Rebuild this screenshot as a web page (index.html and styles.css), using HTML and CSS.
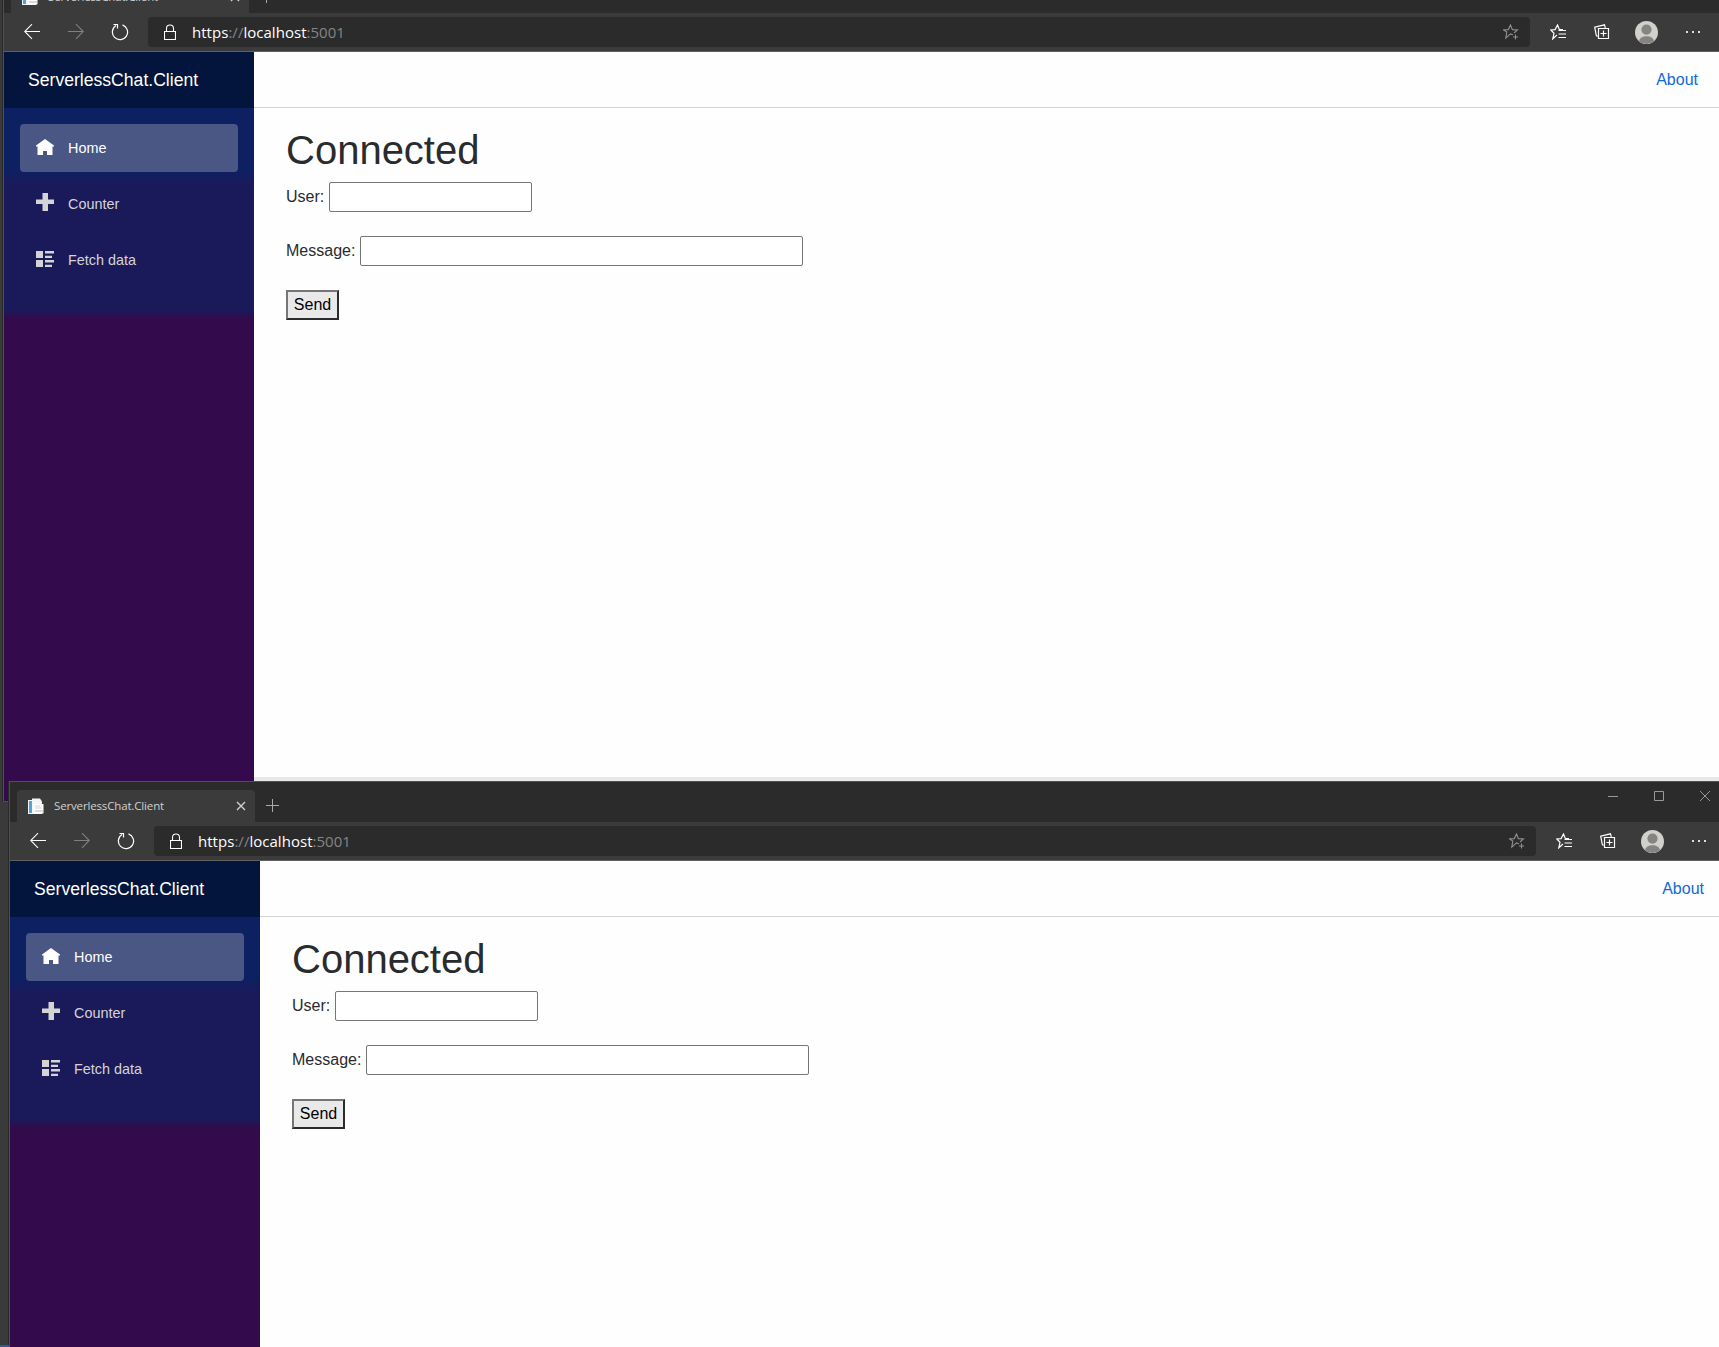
FILE: index.html
```html
<!DOCTYPE html>
<html lang="en">
<head>
<meta charset="utf-8">
<title>ServerlessChat.Client</title>
<link rel="stylesheet" href="styles.css">
</head>
<body>
<svg width="0" height="0" class="defs" aria-hidden="true">
  <symbol id="i-file" viewBox="0 0 16 16"><path d="M0 2h5v14H0z" fill="#eef4f8"/><path d="M1 3h3v12H1z" fill="#55a3d4"/><path d="M4 .5h8l2 3V16H4z" fill="#f5f5f5"/><path d="M6 6h9.500v9.500H6z" fill="#fff"/><path d="M7 8h5M7 10h7" stroke="#c9d5dc" fill="none"/><path d="M7 12h8v2H7z" fill="#dadada"/></symbol>
  <symbol id="i-x" viewBox="0 0 10 10"><path d="M1 1l8 8M9 1l-8 8" stroke="#d0d0d0" stroke-width="1.400"/></symbol>
  <symbol id="i-plus" viewBox="0 0 13 13"><path d="M6.500 0v13M0 6.500h13" stroke="#aaa"/></symbol>
  <symbol id="i-back" viewBox="0 0 16 16"><path d="M0.500 7.500H16M8 .200L.700 7.500 8 14.800" stroke="#fff" stroke-width="1.100" fill="none"/></symbol>
  <symbol id="i-fwd" viewBox="0 0 16 16"><path d="M0 7.500h15.500M8 .200l7.300 7.300L8 14.800" stroke="#808080" stroke-width="1.100" fill="none"/></symbol>
  <symbol id="i-reload" viewBox="0 0 18 18"><path d="M11.500 1.900A7.600 7.600 0 1 1 5 2.600M2.500 1.500h4v4" stroke="#fff" stroke-width="1.200" fill="none"/></symbol>
  <symbol id="i-lock" viewBox="0 0 12 17"><path d="M.500 7.500h11v8H.500zM2.500 7.500V4.500a3.500 3.500 0 0 1 7 0v3" stroke="#fff" stroke-width="1.100" fill="none"/></symbol>
  <symbol id="i-star" viewBox="0 0 16 16"><path d="M10.500 10.800L8 9.900l-4.700 4.200 1-6L.900 5.900l4.900-.300L8 1l1.900 4.600 5 .300L11.500 9M13 10.500v5M10.500 13h5" transform="translate(-.500 0)" stroke="#909090" stroke-width="1.100" fill="none"/></symbol>
  <symbol id="i-favs" viewBox="0 0 16 16"><path d="M7 11l-4.200 3.800L4 9.300.800 6l4.300-.400L7.500 1l1.800 4.500H13M8.500 6.500H16M8.500 10H16M8.500 13.500H16" stroke="#fff" stroke-width="1.200" fill="none"/></symbol>
  <symbol id="i-coll" viewBox="0 0 16 16"><path d="M4.500 4.500h10v10h-10zM9.500 6.500v6M6.500 9.500h6M3.500 12.500L2.300 11.500.700 3.200 10.500.800l.800 3" stroke="#fff" stroke-width="1.200" fill="none"/></symbol>
  <symbol id="i-user" viewBox="0 0 23 23"><circle cx="11.500" cy="11.500" r="11.500" fill="#d1d0cd"/><circle cx="11.500" cy="8.600" r="5.100" fill="#858482"/><path d="M4 20.200c.500-3.300 3.600-5 7.500-5s7 1.700 7.500 5A11.500 11.500 0 0 1 4 20.200z" fill="#858482"/></symbol>
  <symbol id="i-dots" viewBox="0 0 14 2"><path d="M0 0h2v2H0zM6 0h2v2H6zM12 0h2v2h-2z" fill="#ddd"/></symbol>
  <symbol id="i-home" viewBox="0 0 18 16"><path d="M9 0L0 6.500V7.500h1.500V16H7v-4h4v4h5.500V7.500H18V6.500z" fill="#fff"/></symbol>
  <symbol id="i-cross" viewBox="0 0 18 18"><path d="M6.500 0h5.500v6.500h6v4.500h-6v7H6.500v-7H0V6.500h6.500z" fill="#d4d4d4"/></symbol>
  <symbol id="i-list" viewBox="0 0 18 16"><path d="M0 0h7v7H0zM0 9h7v7H0zM9 0h9v2.500H9zM9 4.700h7V7H9zM9 9h9v2.500H9zM9 13.700h7V16H9z" fill="#d4d4d4"/></symbol>
</svg>

<section class="window window-back">
  <header class="tabstrip">
    <div class="tab"><svg class="favicon"><use href="#i-file"/></svg><span class="tab-title">ServerlessChat.Client</span><svg class="tab-close"><use href="#i-x"/></svg></div>
    <svg class="new-tab"><use href="#i-plus"/></svg>
  </header>
  <div class="toolbar">
    <span class="tool"><svg class="s16"><use href="#i-back"/></svg></span>
    <span class="tool"><svg class="s16"><use href="#i-fwd"/></svg></span>
    <span class="tool"><svg class="s18"><use href="#i-reload"/></svg></span>
    <div class="address"><svg class="lock"><use href="#i-lock"/></svg><span class="url">https<i>://</i>localhost<i>:5001</i></span><svg class="s16"><use href="#i-star"/></svg></div>
    <span class="tool"><svg class="s16"><use href="#i-favs"/></svg></span>
    <span class="tool"><svg class="s16"><use href="#i-coll"/></svg></span>
    <span class="tool profile"><svg class="s23"><use href="#i-user"/></svg></span>
    <span class="tool"><svg class="dots"><use href="#i-dots"/></svg></span>
  </div>
  <div class="page">
    <nav class="sidebar">
      <div class="brand">ServerlessChat.Client</div>
      <a class="nav-item active"><svg class="nav-icon"><use href="#i-home"/></svg>Home</a>
      <a class="nav-item"><svg class="nav-icon tall"><use href="#i-cross"/></svg>Counter</a>
      <a class="nav-item"><svg class="nav-icon"><use href="#i-list"/></svg>Fetch data</a>
    </nav>
    <main class="main">
      <div class="top-row"><a class="about">About</a></div>
      <div class="content">
        <h1>Connected</h1>
        <label class="field">User: <input class="user" type="text"></label>
        <label class="field">Message: <input class="message" type="text"></label>
        <button class="send">Send</button>
      </div>
      <div class="page-edge"></div>
    </main>
  </div>
</section>

<section class="window window-front">
  <header class="tabstrip">
    <div class="tab"><svg class="favicon"><use href="#i-file"/></svg><span class="tab-title">ServerlessChat.Client</span><svg class="tab-close"><use href="#i-x"/></svg></div>
    <svg class="new-tab"><use href="#i-plus"/></svg>
    <svg class="controls" viewBox="0 0 102 10"><path d="M0 5.500h10M46.500.500h9v9h-9zM92 0l10 10M102 0L92 10" stroke="#999" fill="none"/></svg>
  </header>
  <div class="toolbar">
    <span class="tool"><svg class="s16"><use href="#i-back"/></svg></span>
    <span class="tool"><svg class="s16"><use href="#i-fwd"/></svg></span>
    <span class="tool"><svg class="s18"><use href="#i-reload"/></svg></span>
    <div class="address"><svg class="lock"><use href="#i-lock"/></svg><span class="url">https<i>://</i>localhost<i>:5001</i></span><svg class="s16"><use href="#i-star"/></svg></div>
    <span class="tool"><svg class="s16"><use href="#i-favs"/></svg></span>
    <span class="tool"><svg class="s16"><use href="#i-coll"/></svg></span>
    <span class="tool profile"><svg class="s23"><use href="#i-user"/></svg></span>
    <span class="tool"><svg class="dots"><use href="#i-dots"/></svg></span>
  </div>
  <div class="page">
    <nav class="sidebar">
      <div class="brand">ServerlessChat.Client</div>
      <a class="nav-item active"><svg class="nav-icon"><use href="#i-home"/></svg>Home</a>
      <a class="nav-item"><svg class="nav-icon tall"><use href="#i-cross"/></svg>Counter</a>
      <a class="nav-item"><svg class="nav-icon"><use href="#i-list"/></svg>Fetch data</a>
    </nav>
    <main class="main">
      <div class="top-row"><a class="about">About</a></div>
      <div class="content">
        <h1>Connected</h1>
        <label class="field">User: <input class="user" type="text"></label>
        <label class="field">Message: <input class="message" type="text"></label>
        <button class="send">Send</button>
      </div>
    </main>
  </div>
</section>
<div class="taskbar-edge"></div>
</body>
</html>
```
FILE: styles.css
```css
* { box-sizing: border-box; }
html, body { height: 100%; }
body {
  margin: 0;
  position: relative;
  overflow: hidden;
  background: #3a3a3a;
  font-family: "Liberation Sans", Arial, sans-serif;
  font-size: 16px;
  color: #292b2e;
}
svg { display: block; flex: none; }
.defs { position: absolute; }

/* Windows on the desktop */
.window {
  position: absolute;
  width: 1728px;
  display: flex;
  flex-direction: column;
  border: 1px solid #505050;
  background: #3b3b3b;
  box-shadow: -1px 0 0 #292929;
}
.window-back { left: 3px; top: -28px; height: 830px; }
.window-front { left: 9px; top: 781px; height: 566px; border-bottom: 0; }

.tabstrip {
  height: 40px;
  flex: none;
  display: flex;
  align-items: flex-end;
  padding-left: 7px;
  background: #2b2b2b;
}
.tab {
  width: 238px;
  height: 32px;
  display: flex;
  align-items: center;
  padding: 0 9px 0 11px;
  border-radius: 4px 4px 0 0;
  background: #3b3b3b;
}
.favicon { width: 16px; height: 16px; }
.tab-title {
  flex: 1;
  margin-left: 10px;
  font: 11.5px/16px "Open Sans", "Noto Sans", sans-serif;
  letter-spacing: -0.15px;
  color: #d0d0d0;
}
.tab-close { width: 10px; height: 10px; }
.new-tab { width: 13px; height: 13px; margin: 0 0 10px 11px; }
.controls { width: 102px; height: 10px; margin: 0 26px 21px auto; }

.toolbar {
  height: 39px;
  flex: none;
  display: flex;
  align-items: center;
  padding-left: 6px;
  border-bottom: 1px solid #606060;
}
.tool { width: 44px; display: flex; justify-content: center; }
.profile { width: 45px; margin-right: 2px; }
.s16 { width: 16px; height: 16px; }
.s18 { width: 18px; height: 18px; }
.s23 { width: 23px; height: 23px; }
.dots { width: 14px; height: 2px; }
.address {
  width: 1382px;
  height: 30px;
  margin: 0 6px;
  padding: 0 11px 0 16px;
  display: flex;
  align-items: center;
  border-radius: 4px;
  background: #2b2b2b;
}
.lock { width: 12px; height: 17px; }
.url {
  flex: 1;
  margin-left: 16px;
  font: 15px/20px "Open Sans", "Noto Sans", sans-serif;
  letter-spacing: 0.03px;
  color: #fff;
}
.url i { font-style: normal; color: #858585; }

/* Blazor page */
.page { flex: 1; display: flex; background: #fefefe; }
.sidebar {
  width: 250px;
  flex: none;
  display: flex;
  flex-direction: column;
  gap: 8px;
  background: linear-gradient(#0c2062 0, #0c2062 116px, #1a1a5b 132px, #1a1a5b 258px, #330a4b 267px);
}
.brand {
  height: 56px;
  margin-bottom: 8px;
  padding-left: 24px;
  font-size: 17.6px;
  line-height: 56px;
  color: #fff;
  background: #03153c;
}
.nav-item {
  height: 48px;
  margin: 0 16px;
  padding-left: 16px;
  display: flex;
  align-items: center;
  border-radius: 4px;
  font-size: 14.4px;
  color: #d4d4d4;
}
.nav-item.active { background: #4a5785; color: #fff; }
.nav-icon { width: 18px; height: 16px; margin: 0 14px 2px 0; }
.nav-icon.tall { height: 18px; margin-bottom: 4px; }

.main { flex: 1; display: flex; flex-direction: column; }
.top-row {
  height: 56px;
  display: flex;
  align-items: center;
  justify-content: flex-end;
  padding-right: 32px;
  border-bottom: 1px solid #d4d4d4;
}
.about { color: #0f69d6; }
.content {
  flex: 1;
  display: flex;
  flex-direction: column;
  align-items: flex-start;
  gap: 24px;
  padding: 18px 32px 0;
}
h1 { margin: 0 0 -16px; font-size: 40px; font-weight: 400; line-height: 48px; }
.field { height: 30px; display: flex; align-items: center; gap: 5px; line-height: 28px; }
.field input { height: 30px; margin: 0; border: 1px solid #767676; border-radius: 2px; background: #fff; }
.user { width: 203px; }
.message { width: 443px; }
.send {
  width: 53px;
  height: 30px;
  padding: 0;
  border: 2px solid;
  border-color: #767676 #2b2b2b #2b2b2b #767676;
  background: #e9e9e9;
  font: 16px/24px "Liberation Sans", Arial, sans-serif;
  color: #000;
}
.page-edge { height: 24px; background: #e8e8e8; }
.taskbar-edge { position: absolute; left: 0; bottom: 0; width: 9px; height: 2px; background: #3156a6; }
```
